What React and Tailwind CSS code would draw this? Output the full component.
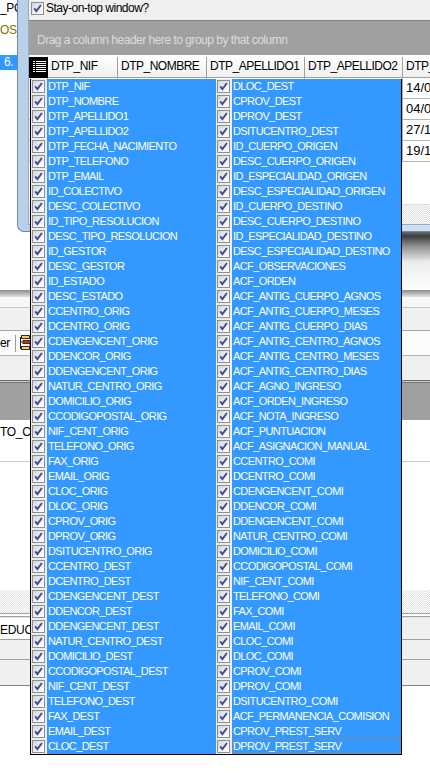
import React from "react";

const LEFT = [
  "DTP_NIF", "DTP_NOMBRE", "DTP_APELLIDO1", "DTP_APELLIDO2", "DTP_FECHA_NACIMIENTO",
  "DTP_TELEFONO", "DTP_EMAIL", "ID_COLECTIVO", "DESC_COLECTIVO", "ID_TIPO_RESOLUCION",
  "DESC_TIPO_RESOLUCION", "ID_GESTOR", "DESC_GESTOR", "ID_ESTADO", "DESC_ESTADO",
  "CCENTRO_ORIG", "DCENTRO_ORIG", "CDENGENCENT_ORIG", "DDENCOR_ORIG", "DDENGENCENT_ORIG",
  "NATUR_CENTRO_ORIG", "DOMICILIO_ORIG", "CCODIGOPOSTAL_ORIG", "NIF_CENT_ORIG", "TELEFONO_ORIG",
  "FAX_ORIG", "EMAIL_ORIG", "CLOC_ORIG", "DLOC_ORIG", "CPROV_ORIG",
  "DPROV_ORIG", "DSITUCENTRO_ORIG", "CCENTRO_DEST", "DCENTRO_DEST", "CDENGENCENT_DEST",
  "DDENCOR_DEST", "DDENGENCENT_DEST", "NATUR_CENTRO_DEST", "DOMICILIO_DEST", "CCODIGOPOSTAL_DEST",
  "NIF_CENT_DEST", "TELEFONO_DEST", "FAX_DEST", "EMAIL_DEST", "CLOC_DEST",
];

const RIGHT = [
  "DLOC_DEST", "CPROV_DEST", "DPROV_DEST", "DSITUCENTRO_DEST", "ID_CUERPO_ORIGEN",
  "DESC_CUERPO_ORIGEN", "ID_ESPECIALIDAD_ORIGEN", "DESC_ESPECIALIDAD_ORIGEN", "ID_CUERPO_DESTINO", "DESC_CUERPO_DESTINO",
  "ID_ESPECIALIDAD_DESTINO", "DESC_ESPECIALIDAD_DESTINO", "ACF_OBSERVACIONES", "ACF_ORDEN", "ACF_ANTIG_CUERPO_AGNOS",
  "ACF_ANTIG_CUERPO_MESES", "ACF_ANTIG_CUERPO_DIAS", "ACF_ANTIG_CENTRO_AGNOS", "ACF_ANTIG_CENTRO_MESES", "ACF_ANTIG_CENTRO_DIAS",
  "ACF_AGNO_INGRESO", "ACF_ORDEN_INGRESO", "ACF_NOTA_INGRESO", "ACF_PUNTUACION", "ACF_ASIGNACION_MANUAL",
  "CCENTRO_COMI", "DCENTRO_COMI", "CDENGENCENT_COMI", "DDENCOR_COMI", "DDENGENCENT_COMI",
  "NATUR_CENTRO_COMI", "DOMICILIO_COMI", "CCODIGOPOSTAL_COMI", "NIF_CENT_COMI", "TELEFONO_COMI",
  "FAX_COMI", "EMAIL_COMI", "CLOC_COMI", "DLOC_COMI", "CPROV_COMI",
  "DPROV_COMI", "DSITUCENTRO_COMI", "ACF_PERMANENCIA_COMISION", "CPROV_PREST_SERV", "DPROV_PREST_SERV",
];

const DATES = ["14/0", "04/0", "27/1", "19/1"];

function Check() {
  return (
    <span className="block h-[13px] w-[13px] shrink-0 border border-[#8e8f8f] bg-[linear-gradient(135deg,#d4d4d4_0%,#efefef_55%,#ffffff_100%)]">
      <svg width="11" height="11" viewBox="0 0 11 11" className="block">
        <path d="M2.2 5.3 L4.4 8.1 L8.9 2" fill="none" stroke="#3d4d9e" strokeWidth="1.9" />
      </svg>
    </span>
  );
}

function Item({ label, focus }) {
  return (
    <div className="flex h-[15px]">
      <div className="w-[16px] shrink-0 bg-[#ececec] pl-[1px] pt-[1px]">
        <Check />
      </div>
      {focus ? (
        <div className="flex-1 overflow-hidden whitespace-nowrap border border-dotted border-[#c8783c] bg-[#3399ff] leading-[13px] text-white">
          {label}
        </div>
      ) : (
        <div className="flex-1 overflow-hidden whitespace-nowrap bg-[#3399ff] pl-[1px] leading-[15px] text-white">
          {label}
        </div>
      )}
    </div>
  );
}

function HeadCell({ w, children }) {
  return (
    <div
      className={`${w} shrink-0 overflow-hidden whitespace-nowrap border-b border-r border-[#a0a0a0] bg-[linear-gradient(to_bottom,#ffffff,#f0f0f0)] pl-[3px] text-[12px] leading-[18px] tracking-[-0.5px]`}
    >
      {children}
    </div>
  );
}

function ListIcon() {
  return (
    <svg width="13" height="11" viewBox="0 0 13 11" className="block">
      {[0, 2, 4, 6, 8, 10].map((y) => (
        <g key={y} fill="#ffffff">
          <rect x="0" y={y} width="2" height="1" />
          <rect x="3" y={y} width="10" height="1" />
        </g>
      ))}
    </svg>
  );
}

function TreeIcon() {
  return (
    <svg width="14" height="16" viewBox="0 0 14 16" className="block">
      <path d="M2.5 2 V14 M2.5 7 H4.5 M2.5 13 H3.5" stroke="#202020" strokeWidth="1" fill="none" />
      <rect x="3.5" y="0.5" width="8" height="3" fill="#f4d24a" stroke="#303030" strokeWidth="1" />
      <rect x="5" y="5.5" width="8" height="3" fill="#e02020" stroke="#303030" strokeWidth="1" />
      <rect x="11" y="9" width="3" height="1.5" fill="#3a8ee0" />
      <rect x="3.5" y="11.5" width="8" height="3" fill="#f4d24a" stroke="#303030" strokeWidth="1" />
    </svg>
  );
}

function Dialog() {
  return (
    <div className="absolute left-[17px] top-0 h-[232px] w-[440px] rounded-bl-[7px] border-b border-l border-[#6d88aa] bg-[linear-gradient(90deg,#b9d0ea,#cde0f3)] pb-[6px] pl-[10px]">
      <div className="flex h-full flex-col border-b border-l border-[#97abc4] bg-[#f0f0f0]">
        <div className="flex h-[20px] shrink-0 items-start">
          <div className="ml-[2px] mt-[2px]">
            <Check />
          </div>
          <span className="ml-[2px] whitespace-nowrap text-[12px] leading-[16px] tracking-[-0.5px]">
            Stay-on-top window?
          </span>
        </div>
        <div className="flex flex-1 flex-col bg-white">
          <div className="flex h-[35px] shrink-0 items-center border-t border-[#808080] bg-[#a0a0a0] pl-[8px] pt-[3px]">
            <span className="whitespace-nowrap text-[12px] tracking-[-0.5px] text-[#dcdcdc]">
              Drag a column header here to group by that column
            </span>
          </div>
          <div className="h-[2px] shrink-0 bg-white" />
          <div className="flex h-[21px] shrink-0">
            <div className="w-[19px] shrink-0 bg-black pl-[4px] pt-[4px]">
              <ListIcon />
            </div>
            <HeadCell w="w-[70px]">DTP_NIF</HeadCell>
            <HeadCell w="w-[89px]">DTP_NOMBRE</HeadCell>
            <HeadCell w="w-[98px]">DTP_APELLIDO1</HeadCell>
            <HeadCell w="w-[98px]">DTP_APELLIDO2</HeadCell>
            <HeadCell w="w-[98px]">DTP_FECHA_NACIMIENTO</HeadCell>
          </div>
          {DATES.map((d) => (
            <div key={d} className="flex h-[21px] shrink-0">
              <div className="w-[19px] shrink-0 border-b border-r border-[#b4b4b4] bg-[#f0f0f0]" />
              <div className="w-[70px] shrink-0 border-b border-r border-[#b4b4b4]" />
              <div className="w-[89px] shrink-0 border-b border-r border-[#b4b4b4]" />
              <div className="w-[98px] shrink-0 border-b border-r border-[#b4b4b4]" />
              <div className="w-[98px] shrink-0 border-b border-r border-[#b4b4b4]" />
              <div className="w-[98px] shrink-0 border-b border-r border-[#b4b4b4] pl-[3px] text-[13px] leading-[20px]">
                {d}
              </div>
            </div>
          ))}
          <div className="flex-1 bg-white" />
          <div className="h-[20px] shrink-0 border-t border-[#e0e0e0] bg-[image:repeating-conic-gradient(#dedede_0%_25%,#ffffff_0%_50%)] bg-[length:2px_2px]" />
        </div>
      </div>
    </div>
  );
}

function Popup() {
  return (
    <div className="absolute left-[30px] top-[79px] flex w-[372px] border-x border-b border-black text-[11px] tracking-[-0.6px]">
      <div className="flex w-[185px] flex-col">
        {LEFT.map((l) => (
          <Item key={l} label={l} />
        ))}
      </div>
      <div className="flex w-[185px] flex-col">
        {RIGHT.map((l, i) => (
          <Item key={l} label={l} focus={i === RIGHT.length - 1} />
        ))}
      </div>
    </div>
  );
}

function Background() {
  return (
    <div className="flex flex-col text-[12px] tracking-[-0.3px]">
      {/* A: grid behind the dialog */}
      <div className="flex h-[232px] shrink-0">
        <div className="flex w-[17px] flex-col">
          <div className="h-[17px] overflow-hidden whitespace-nowrap leading-[17px]">_PC</div>
          <div className="h-[26px] overflow-hidden whitespace-nowrap leading-[26px] text-[#857100]">OS_</div>
          <div className="h-[12px]" />
          <div className="h-[15px] overflow-hidden whitespace-nowrap bg-[#3399ff] pl-[4px] leading-[15px] text-white">6.</div>
          <div className="flex-1" />
        </div>
        <div className="flex-1" />
      </div>
      {/* B: shadow */}
      <div className="flex h-[58px] shrink-0">
        <div className="w-[30px] bg-white" />
        <div className="flex-1 bg-[linear-gradient(to_bottom,#6a6a6a_0px,#3c3c3c_4px,#8e8e8e_14px,#ececec_30px,#ffffff_58px)]" />
      </div>
      {/* C */}
      <div className="h-[7px] shrink-0 bg-[linear-gradient(to_bottom,#8c8c8c,#e2e2e2)]" />
      {/* D */}
      <div className="flex h-[34px] shrink-0 flex-col">
        <div className="h-[10px] bg-[#f7f7f7]" />
        <div className="h-[1px] bg-[#c8c8c8]" />
        <div className="h-[22px] bg-[#f0f0f0]" />
        <div className="h-[1px] bg-[#a8a8a8]" />
      </div>
      {/* E: toolbar */}
      <div className="flex h-[25px] shrink-0 items-center border-b border-[#b0b0b0] bg-[#fbfbfb]">
        <span className="w-[14px] overflow-hidden whitespace-nowrap leading-[16px]">er</span>
        <div className="ml-[1px] h-[17px] w-[1px] bg-[#9a9a9a]" />
        <div className="h-[17px] w-[1px] bg-white" />
        <div className="ml-[1px]">
          <TreeIcon />
        </div>
        <div className="flex-1" />
      </div>
      {/* F */}
      <div className="h-[24px] shrink-0 bg-[#f0f0f0]" />
      {/* G */}
      <div className="flex h-[40px] shrink-0 flex-col">
        <div className="h-[1px] bg-[#6e6e6e]" />
        <div className="h-[1px] bg-[#c4c4c4]" />
        <div className="h-[1px] bg-[#7a7a7a]" />
        <div className="flex-1 bg-[#a0a0a0]" />
      </div>
      {/* H */}
      <div className="h-[42px] shrink-0 border-b border-[#c8c8c8] bg-white">
        <div className="w-[30px] overflow-hidden whitespace-nowrap pt-[4px] leading-[16px]">TO_CA</div>
      </div>
      {/* I */}
      <div className="h-[128px] shrink-0 bg-white" />
      {/* J: hatch */}
      <div className="h-[23px] shrink-0 bg-[image:repeating-conic-gradient(#e2e2e2_0%_25%,#ffffff_0%_50%)] bg-[length:2px_2px]" />
      {/* K */}
      <div className="flex h-[5px] shrink-0 flex-col">
        <div className="h-[1px] bg-[#a0a0a0]" />
        <div className="h-[2px] bg-white" />
        <div className="h-[1px] bg-[#a0a0a0]" />
        <div className="h-[1px] bg-[#e4e4e4]" />
      </div>
      {/* L */}
      <div className="flex h-[22px] shrink-0 border-b border-[#a0a0a0] bg-[#f0f0f0]">
        <div className="w-[32px] overflow-hidden whitespace-nowrap bg-white pt-[4px] leading-[16px]">EDUCA</div>
      </div>
      {/* M */}
      <div className="h-[20px] shrink-0 border-b border-[#a0a0a0] bg-[#f0f0f0]" />
      {/* N */}
      <div className="h-[26px] shrink-0 border-b border-[#808080] bg-[#f0f0f0]" />
      {/* O */}
      <div className="h-[89px] shrink-0 bg-white" />
    </div>
  );
}

export default function App() {
  return (
    <div className="relative h-[775px] w-[430px] overflow-hidden bg-white font-['Liberation_Sans',Arial,sans-serif] text-black">
      <Background />
      <Dialog />
      <Popup />
    </div>
  );
}
